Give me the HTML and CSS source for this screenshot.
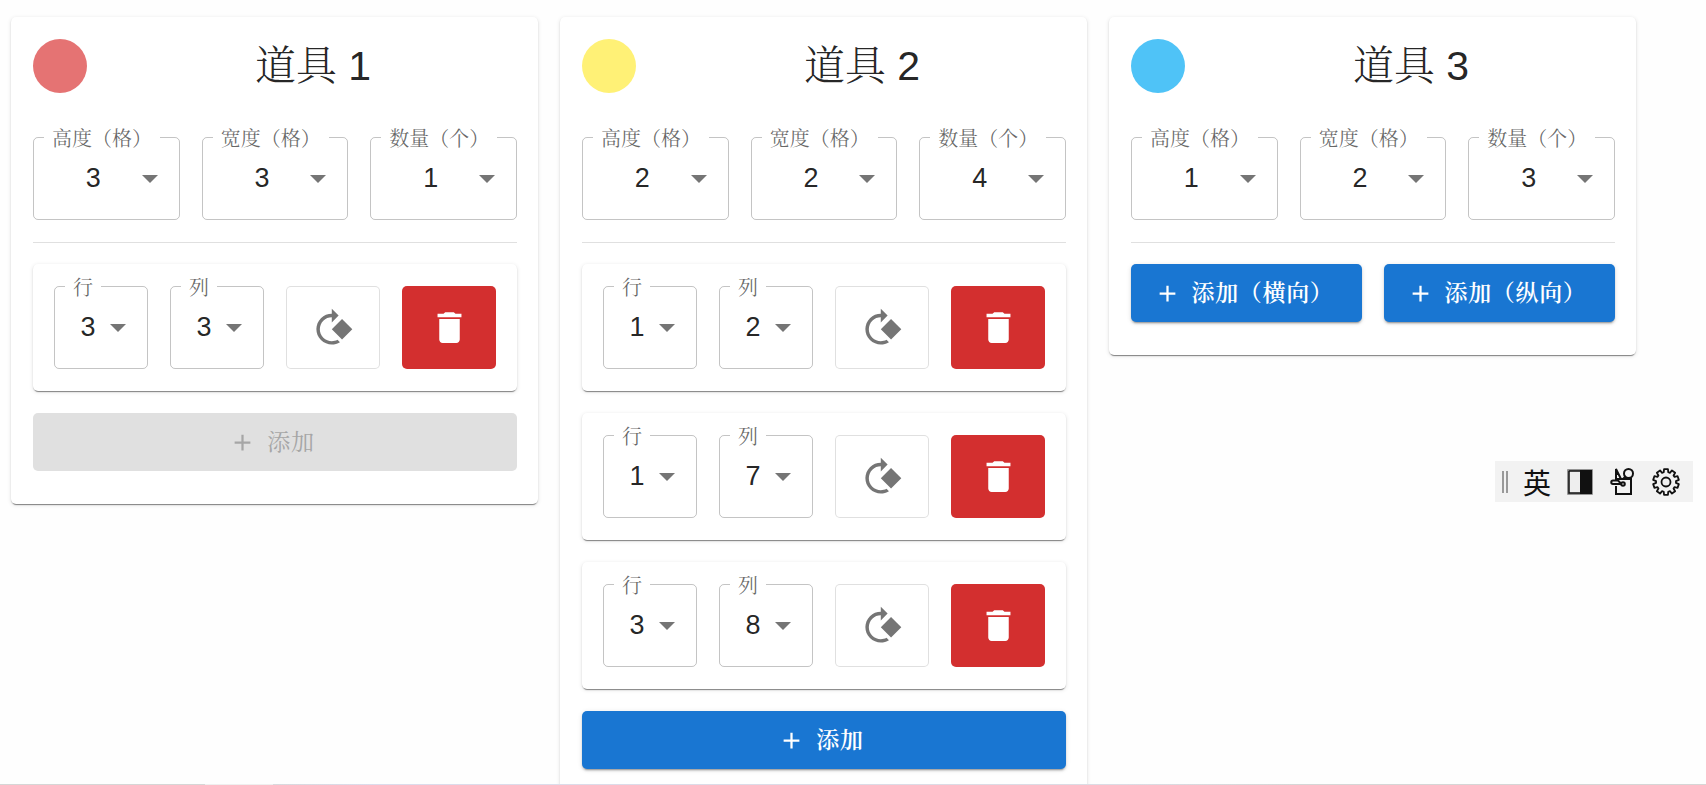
FILE: index.html
```html
<!DOCTYPE html>
<html lang="zh-CN">
<head>
    <meta charset="UTF-8">
    <meta name="viewport" content="width=device-width, initial-scale=1.0">
    <title>道具</title>
    <link rel="stylesheet" href="styles.css">
</head>
<body>
    <!-- 图标 -->
    <svg class="sprite" aria-hidden="true">
        <symbol id="icon-add" viewBox="0 0 24 24">
            <path d="M19 13h-6v6h-2v-6H5v-2h6V5h2v6h6v2z"/>
        </symbol>
        <symbol id="icon-rotate" viewBox="0 0 24 24">
            <path d="M4.64 19.37c3.03 3.03 7.67 3.44 11.15 1.25l-1.46-1.46c-2.66 1.43-6.04 1.03-8.28-1.21-2.73-2.73-2.73-7.17 0-9.9C7.42 6.69 9.21 6.03 11 6.03V9l4-4-4-4v3.01c-2.3 0-4.61.87-6.36 2.63-3.52 3.51-3.52 9.21 0 12.73zM11 13l6 6 6-6-6-6-6 6z"/>
        </symbol>
        <symbol id="icon-delete" viewBox="0 0 24 24">
            <path d="M6 19c0 1.1.9 2 2 2h8c1.1 0 2-.9 2-2V7H6v12zM19 4h-3.5l-1-1h-5l-1 1H5v2h14V4z"/>
        </symbol>
    </svg>

    <main id="props" class="props"></main>

    <!-- 输入法工具条 -->
    <div class="ime-bar">
        <span class="ime-grip"></span>
        <button type="button" class="ime-btn">英</button>
        <button type="button" class="ime-btn" aria-label="全角/半角">
            <svg viewBox="0 0 28 28">
                <path d="M2 2h24v24H2z" fill="#eee" stroke="#777" stroke-width="1.5"/>
                <path d="M3 3v22h11M3 3h11" fill="none" stroke="#111" stroke-width="1.5"/>
                <path d="M14 2h12v24H14z" fill="#111"/>
            </svg>
        </button>
        <button type="button" class="ime-btn" aria-label="工具箱">
            <svg viewBox="0 0 28 28" fill="none" stroke="#111" stroke-width="2">
                <path d="M7 13V11h15v15H7v-8"/>
                <path d="M7 11V1l5 10M7 6l3 0"/>
                <circle cx="19.500" cy="5.500" r="4.500"/>
                <path d="M14 11l3-3"/>
                <path d="M12 16H4a1.500 1.500 0 0 1 0-3.500H9l3 3"/>
                <circle cx="14" cy="16" r="1.800"/>
            </svg>
        </button>
        <button type="button" class="ime-btn" aria-label="设置">
            <svg id="gear" viewBox="0 0 28 28" fill="none" stroke="#111" stroke-width="1.800" stroke-linejoin="round">
                <circle cx="14" cy="14" r="4.500"/>
            </svg>
        </button>
    </div>
    <div class="bottom-line"></div>

    <script>
        const props = [
            { color: 'red', height: 3, width: 3, count: 1, placed: [[3, 3]], buttons: ['添加'], disabled: true },
            { color: 'yellow', height: 2, width: 2, count: 4, placed: [[1, 2], [1, 7], [3, 8]], buttons: ['添加'] },
            { color: 'blue', height: 1, width: 2, count: 3, placed: [], buttons: ['添加（横向）', '添加（纵向）'] }
        ];

        function icon(name) {
            return `<svg class="icon" aria-hidden="true"><use href="#icon-${name}"></use></svg>`;
        }

        function field(id, label, value, max) {
            let options = '';
            for (let i = 1; i <= max; i++) {
                options += `<option value="${i}"${i === value ? ' selected' : ''}>${i}</option>`;
            }
            return `<div class="field">
                <label for="${id}">${label}</label>
                <select id="${id}">${options}</select>
            </div>`;
        }

        function placedRow(id, [row, col]) {
            return `<div class="paper placed">
                ${field(id + '-row', '行', row, 5)}
                ${field(id + '-col', '列', col, 9)}
                <button type="button" class="btn-rotate" aria-label="旋转">${icon('rotate')}</button>
                <button type="button" class="btn-delete" aria-label="删除">${icon('delete')}</button>
            </div>`;
        }

        function card(prop, index) {
            const id = 'prop' + (index + 1);
            return `<section class="paper card">
                <div class="card-header">
                    <span class="dot ${prop.color}"></span>
                    <h2>道具 ${index + 1}</h2>
                </div>
                <div class="size">
                    ${field(id + '-height', '高度（格）', prop.height, 5)}
                    ${field(id + '-width', '宽度（格）', prop.width, 9)}
                    ${field(id + '-count', '数量（个）', prop.count, 9)}
                </div>
                <hr>
                <div class="list">
                    ${prop.placed.map((p, i) => placedRow(id + '-' + i, p)).join('')}
                    <div class="actions">
                        ${prop.buttons.map(text => `<button type="button" class="btn-add"${prop.disabled ? ' disabled' : ''}>${icon('add')}<span>${text}</span></button>`).join('')}
                    </div>
                </div>
            </section>`;
        }

        document.getElementById('props').innerHTML = props.map(card).join('');

        // 齿轮外圈
        const teeth = 10;
        let d = '';
        for (let i = 0; i < teeth; i++) {
            [[-0.36, 10], [-0.24, 13], [0.24, 13], [0.36, 10]].forEach(([offset, r]) => {
                const a = (i + 0.5 + offset) * 2 * Math.PI / teeth;
                d += `${d ? 'L' : 'M'}${(14 + r * Math.cos(a)).toFixed(2)} ${(14 + r * Math.sin(a)).toFixed(2)}`;
            });
        }
        const ring = document.createElementNS('http://www.w3.org/2000/svg', 'path');
        ring.setAttribute('d', d + 'Z');
        document.getElementById('gear').appendChild(ring);
    </script>
</body>
</html>
```
FILE: styles.css
```css
* {
    box-sizing: border-box;
}
html {
    height: 100%;
    overflow: hidden;
}
body {
    height: 100%;
    margin: 0;
    overflow: auto;
    scrollbar-width: none;
    font-family: "Liberation Sans", "Noto Serif CJK SC", "Noto Sans CJK SC", sans-serif;
    color: rgba(0, 0, 0, 0.87);
    background: #fefefe;
}
button, select {
    font-family: inherit;
    color: inherit;
    margin: 0;
    cursor: pointer;
}
.sprite {
    display: none;
}
.props {
    display: grid;
    grid-template-columns: repeat(3, minmax(0, 1fr));
    align-items: start;
    gap: 22px;
    padding: 17px 70px 22px 11px;
}
.paper {
    background: #fff;
    border-radius: 5px;
    box-shadow: 0 3px 1px -2px rgba(0, 0, 0, 0.3), 0 1px 1px rgba(0, 0, 0, 0.2), 0 1px 4px rgba(0, 0, 0, 0.12);
}
.card {
    padding: 22px 21px 33px 22px;
}
.card-header {
    display: flex;
    align-items: center;
    gap: 22px;
}
.card-header h2 {
    flex: 1;
    margin: 0;
    font-size: 41px;
    line-height: 54px;
    font-weight: 300;
    text-align: center;
}
.dot {
    width: 54px;
    height: 54px;
    border-radius: 50%;
}
.red {
    background: #e57373;
}
.yellow {
    background: #fff176;
}
.blue {
    background: #4fc3f7;
}
.size {
    display: grid;
    grid-template-columns: repeat(3, minmax(0, 1fr));
    gap: 22px;
    margin-top: 44px;
}
.field {
    position: relative;
    height: 83px;
    border: 1px solid rgba(0, 0, 0, 0.23);
    border-radius: 5px;
}
.field label {
    position: absolute;
    top: -12px;
    left: 10px;
    padding: 0 8px;
    font-size: 20px;
    line-height: 26px;
    font-weight: 400;
    white-space: nowrap;
    color: rgba(0, 0, 0, 0.6);
    background: #fff;
}
.field select {
    display: block;
    width: 100%;
    height: 100%;
    padding: 0 44px 1px 18px;
    border: none;
    outline: none;
    appearance: none;
    background: none;
    font-size: 27px;
    text-align: center;
    text-align-last: center;
}
.field::after {
    content: "";
    position: absolute;
    top: 37px;
    right: 21px;
    border: 8px solid transparent;
    border-top-color: #757575;
    border-bottom: none;
    pointer-events: none;
}
hr {
    height: 1px;
    margin: 22px 0 21px;
    border: none;
    background: rgba(0, 0, 0, 0.12);
}
.list {
    display: flex;
    flex-direction: column;
    gap: 22px;
}
.placed {
    display: grid;
    grid-template-columns: repeat(4, minmax(0, 1fr));
    gap: 22px;
    padding: 22px 21px;
}
.btn-rotate, .btn-delete {
    display: flex;
    align-items: center;
    justify-content: center;
    padding: 0;
    border-radius: 5px;
}
.btn-rotate {
    border: 1px solid rgba(0, 0, 0, 0.12);
    background: #fff;
    color: #757575;
}
.btn-delete {
    border: none;
    background: #d32f2f;
    color: #fff;
}
.icon {
    width: 41px;
    height: 41px;
    fill: currentColor;
}
.actions {
    display: flex;
    gap: 22px;
}
.btn-add {
    flex: 1;
    display: flex;
    align-items: center;
    justify-content: center;
    height: 58px;
    padding: 0 6px 0 0;
    border: none;
    border-radius: 5px;
    background: #1976d2;
    color: #fff;
    font-size: 23px;
    font-weight: 600;
    letter-spacing: 0.02857em;
    white-space: nowrap;
    box-shadow: 0 3px 1px -2px rgba(0, 0, 0, 0.2), 0 2px 2px rgba(0, 0, 0, 0.14), 0 1px 5px rgba(0, 0, 0, 0.12);
}
.btn-add .icon {
    width: 27px;
    height: 27px;
    margin-right: 11px;
}
.btn-add span {
    padding-bottom: 4px;
}
.btn-add:disabled {
    background: #e0e0e0;
    color: #a6a6a6;
    font-weight: 400;
    box-shadow: none;
    cursor: default;
}
/* 输入法工具条 */
.ime-bar {
    position: fixed;
    top: 461px;
    right: 13px;
    display: flex;
    align-items: center;
    gap: 15px;
    height: 41px;
    padding: 0 13px 0 7px;
    background: #f2f2f2;
}
.ime-grip {
    width: 6px;
    height: 22px;
    border: solid #999;
    border-width: 0 2px;
}
.ime-btn {
    width: 28px;
    height: 28px;
    padding: 0;
    border: none;
    background: none;
    color: #111;
    font-family: "Noto Sans CJK SC", sans-serif;
    font-size: 28px;
    line-height: 26px;
}
.ime-btn svg {
    display: block;
    width: 28px;
    height: 28px;
}
.bottom-line {
    position: fixed;
    left: 0;
    right: 0;
    bottom: 0;
    height: 1px;
    background: linear-gradient(90deg, #d6d6d6 12%, #efefef 12%, #efefef 16%, #d9d9dd 16%, #dcdcec 22%, #dcdce4 66%, #d6d6d6 76%);
}
```
